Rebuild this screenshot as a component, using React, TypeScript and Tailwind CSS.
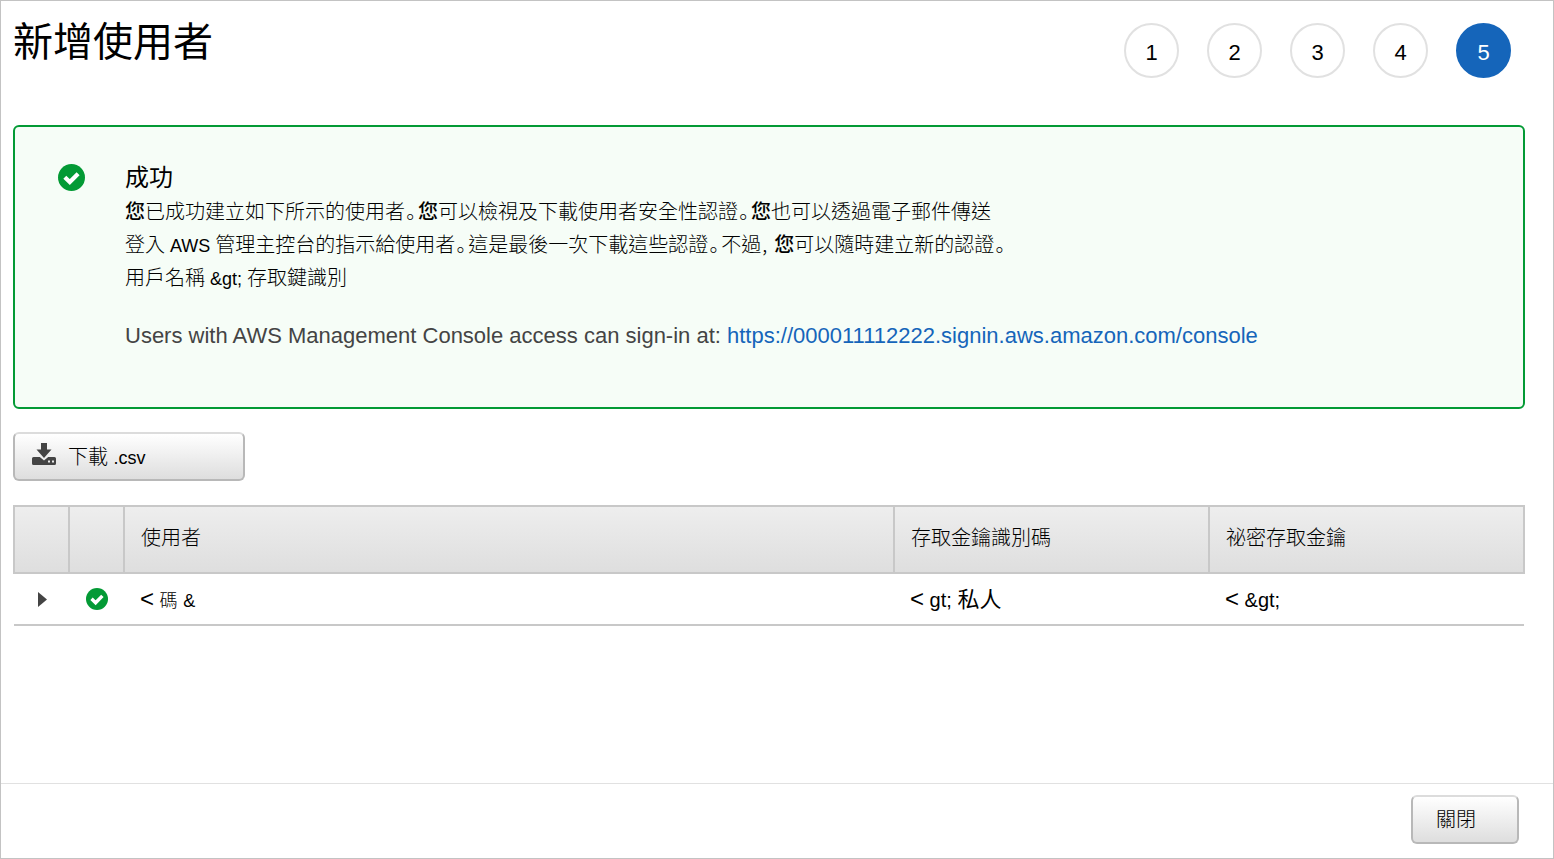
import { Fragment } from 'react';

const steps = [1, 2, 3, 4, 5];
const currentStep = 5;

const messageLines = [
  '您已成功建立如下所示的使用者。您可以檢視及下載使用者安全性認證。您也可以透過電子郵件傳送',
  '登入 AWS 管理主控台的指示給使用者。這是最後一次下載這些認證。不過,您可以隨時建立新的認證。',
  '用戶名稱 &gt; 存取鍵識別',
];

// Narrow punctuation, smaller Latin words and emphasised 您
function Message({ text }: { text: string }) {
  const parts = text.split(/([。,您]| ?[A-Za-z&;.]+ ?)/);
  return (
    <>
      {parts.map((part, i) => {
        if (part === '。' || part === ',') {
          return (
            <span
              key={i}
              className="inline-block w-[13px] pl-px font-['Noto_Sans_CJK_JP',sans-serif] leading-none [font-feature-settings:'palt']"
            >
              {part}
            </span>
          );
        }
        if (part === '您') {
          return <b key={i} className="font-medium">{part}</b>;
        }
        if (/[A-Za-z]/.test(part)) {
          return <span key={i} className="text-[18px] leading-none font-normal">{part}</span>;
        }
        return <Fragment key={i}>{part}</Fragment>;
      })}
    </>
  );
}

function CheckIcon({ className }: { className: string }) {
  return (
    <svg viewBox="0 0 27 27" className={className} aria-hidden="true">
      <circle cx="13.5" cy="13.5" r="13.5" fill="#039a35" />
      <path d="M6.800 13.300l5 4.800 8.300-8.400" fill="none" stroke="#fff" strokeWidth="4.200" />
    </svg>
  );
}

function DownloadIcon() {
  return (
    <svg viewBox="0 0 24 22" className="mb-1.5 h-[22px] w-6 shrink-0" fill="#444" aria-hidden="true">
      <path d="M9 0h6v6.500h4.500L12 15 4.500 6.500H9z" />
      <path
        fillRule="evenodd"
        d="M1.500 14h6.300L12 17.500l4.200-3.500h6.300a1.500 1.500 0 0 1 1.500 1.500v5a1.500 1.500 0 0 1-1.500 1.500h-21A1.500 1.500 0 0 1 0 20.500v-5A1.500 1.500 0 0 1 1.500 14zM16 17.500v2h2v-2zM20 17.500v2h2v-2z"
      />
    </svg>
  );
}

const buttonClass =
  'flex h-[49px] items-center rounded-md border-2 border-[#b8b8b8] border-t-[#dcdcdc] bg-linear-to-b from-white to-[#dedede] text-[20px] font-light text-black';

export default function App() {
  return (
    <div
      lang="zh-TW"
      className="flex min-h-screen flex-col border border-[#c3c3c3] bg-white font-['Liberation_Sans','Noto_Sans_CJK_TC',sans-serif] text-black"
    >
      <main className="flex-1 pr-7 pl-3">
        {/* Title and steps */}
        <header className="flex h-[124px] items-start justify-between pr-[14px]">
          <h1 className="pt-2 text-[40px] leading-[66px]">新增使用者</h1>
          <ol className="flex gap-7 pt-[22px]">
            {steps.map((step) => (
              <li
                key={step}
                aria-current={step === currentStep ? 'step' : undefined}
                className={`flex size-[55px] items-center justify-center rounded-full border-2 pt-1 text-[22px] ${
                  step === currentStep ? 'border-[#1565ba] bg-[#1565ba] text-white' : 'border-[#e1e1e1]'
                }`}
              >
                {step}
              </li>
            ))}
          </ol>
        </header>

        {/* Success message */}
        <section className="flex min-h-[284px] rounded-md border-2 border-[#039a35] bg-[#f6fdf7] pt-[33px] pl-[43px]">
          <CheckIcon className="mt-1 mr-10 size-[27px] shrink-0" />
          <div className="text-[20px] font-light">
            <h2 className="text-[24px] leading-9 font-normal">成功</h2>
            {messageLines.map((line) => (
              <p key={line} className="leading-[33px]">
                <Message text={line} />
              </p>
            ))}
            <p className="mt-6 text-[22px] leading-[33px] font-normal text-[#444]">
              Users with AWS Management Console access can sign-in at:{' '}
              <a href="https://000011112222.signin.aws.amazon.com/console" className="text-[#1565ba]">
                https://000011112222.signin.aws.amazon.com/console
              </a>
            </p>
          </div>
        </section>

        <button type="button" className={`${buttonClass} mt-[23px] w-[232px] gap-3 pl-[17px]`}>
          <DownloadIcon />
          <span>
            下載 <span className="text-[18px] font-normal">.csv</span>
          </span>
        </button>

        {/* Created users */}
        <table className="mt-6 w-full table-fixed border-collapse text-left text-[20px]">
          <thead>
            <tr className="h-[67px] bg-linear-to-b from-[#eeeeee] to-[#dedede]">
              <th className="w-[55px] border-2 border-[#c8c8c8]" aria-label="展開" />
              <th className="w-[55px] border-2 border-[#c8c8c8]" aria-label="狀態" />
              <th className="border-2 border-[#c8c8c8] pb-1 pl-4 font-light">使用者</th>
              <th className="w-[315px] border-2 border-[#c8c8c8] pb-1 pl-4 font-light">存取金鑰識別碼</th>
              <th className="w-[315px] border-2 border-[#c8c8c8] pb-1 pl-4 font-light">祕密存取金鑰</th>
            </tr>
          </thead>
          <tbody>
            <tr className="h-[52px] border-b-2 border-[#c8c8c8]">
              <td>
                <button type="button" aria-label="展開" className="ml-6 block">
                  <svg viewBox="0 0 9 15" className="h-[15px] w-[9px]" aria-hidden="true">
                    <path d="M0 0l9 7.500-9 7.500z" fill="#444" />
                  </svg>
                </button>
              </td>
              <td>
                <CheckIcon className="mx-auto size-[22px]" />
              </td>
              <td className="pl-4">
                <span className="text-[24px]">&lt;</span>{' '}
                <span className="text-[18px] font-light">碼</span> <span className="text-[18px]">&amp;</span>
              </td>
              <td className="pl-4">
                <span className="text-[24px]">&lt;</span> gt; <span className="text-[22px]">私人</span>
              </td>
              <td className="pl-4">
                <span className="text-[24px]">&lt;</span> &amp;gt;
              </td>
            </tr>
          </tbody>
        </table>
      </main>

      <footer className="flex justify-end border-t border-[#e1e1e1] pt-[11px] pr-[34px] pb-[14px]">
        <button type="button" className={`${buttonClass} w-[108px] pl-[23px]`}>
          關閉
        </button>
      </footer>
    </div>
  );
}
